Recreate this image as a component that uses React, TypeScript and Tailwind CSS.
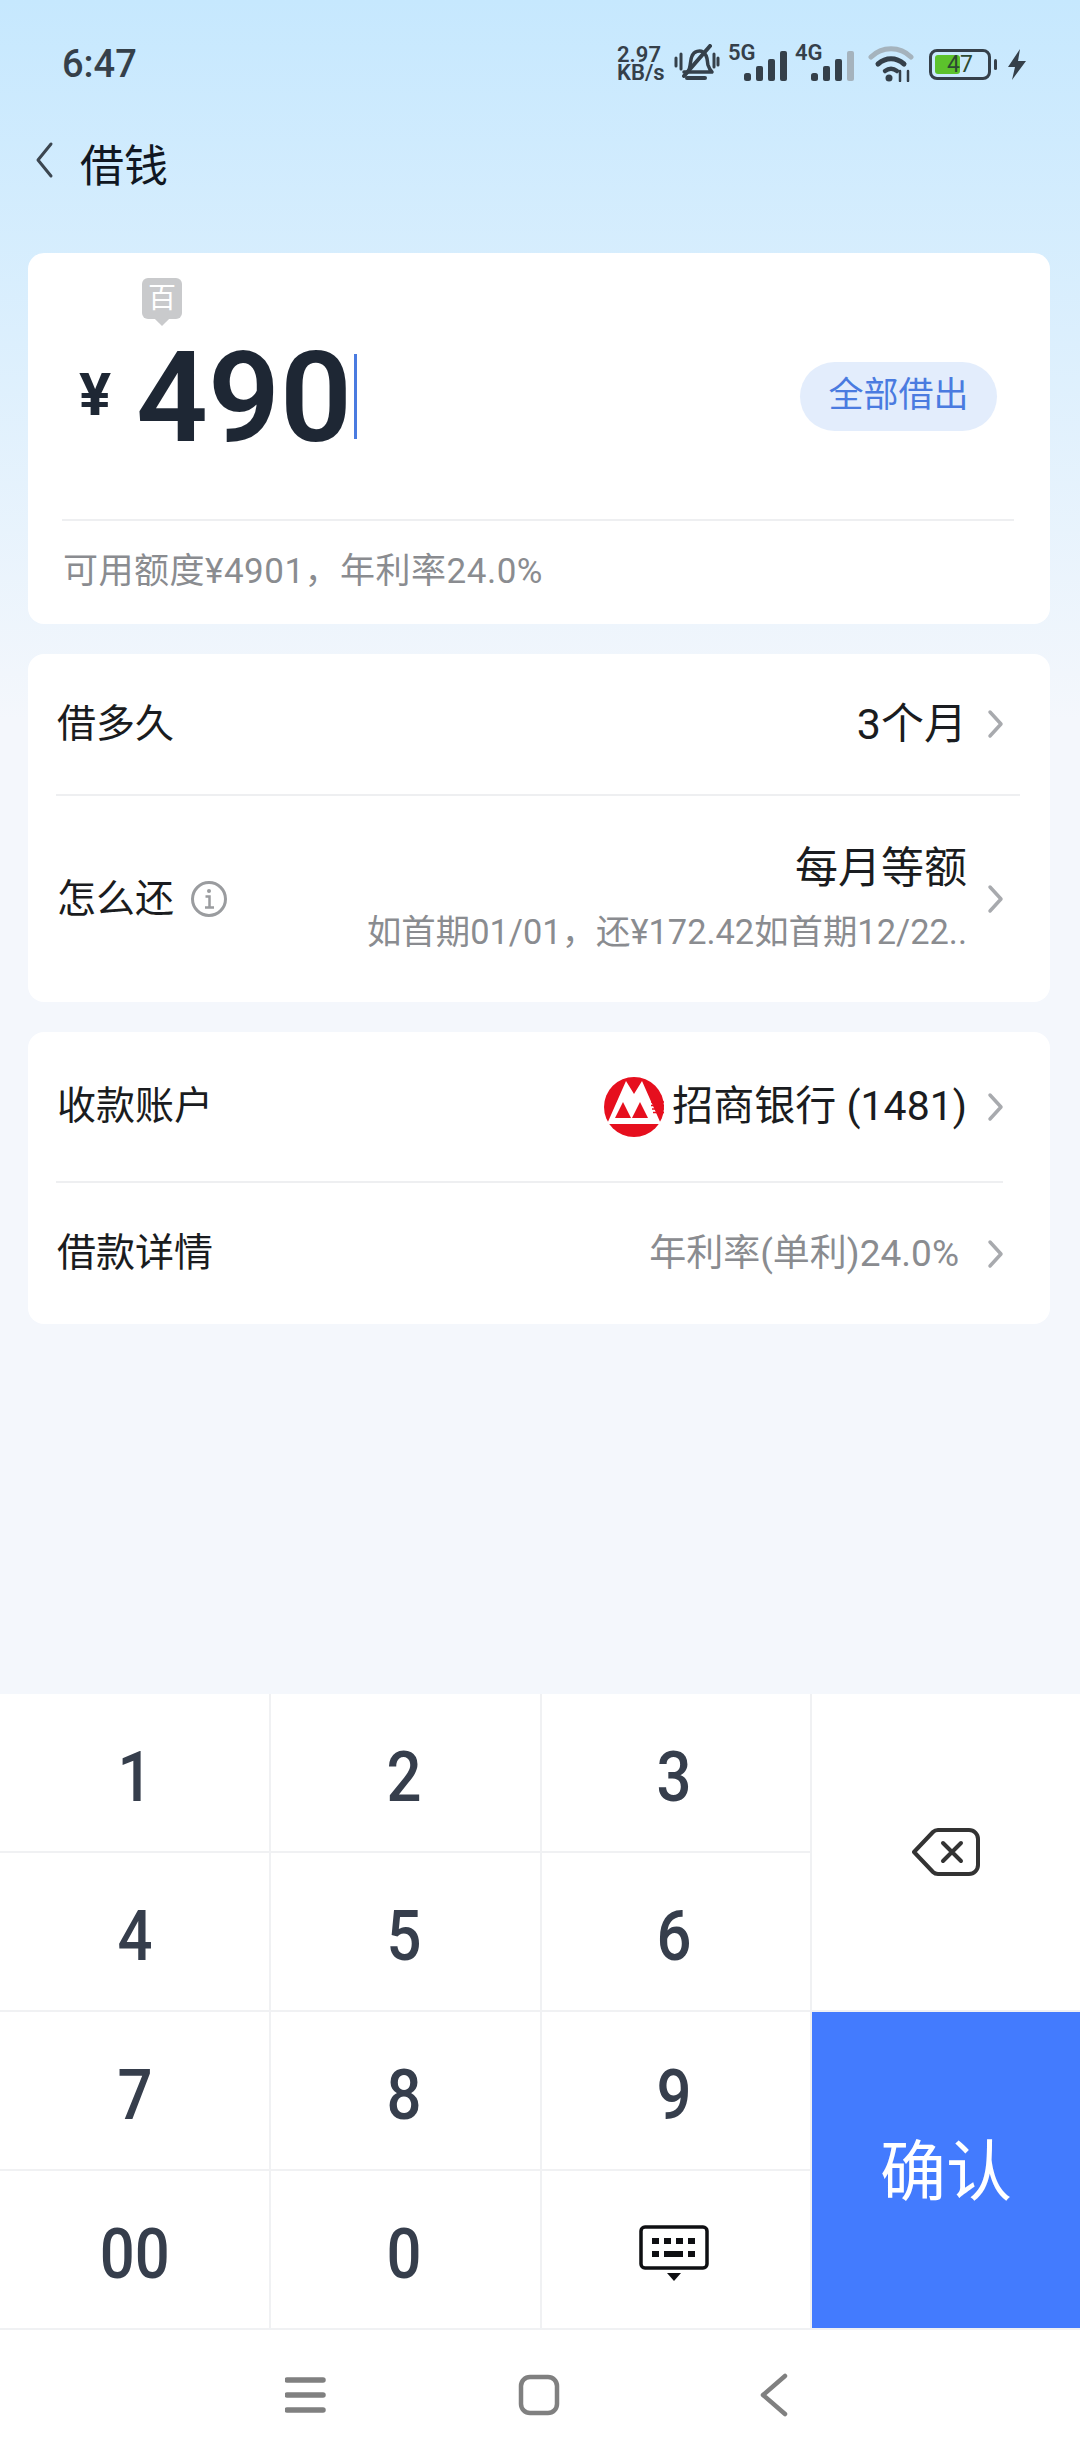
const Chevron = () => (
  <svg width="18" height="30" viewBox="0 0 18 30" fill="none" className="shrink-0">
    <path d="M3 3l11 12-11 12" stroke="#a8aaae" strokeWidth="3.5" strokeLinecap="round" strokeLinejoin="round" />
  </svg>
);

const Signal = ({ label, lastOff }: { label: string; lastOff?: boolean }) => (
  <div className="relative w-[60px] h-[34px]">
    <span className="absolute left-0 top-[-5px] text-[22px] leading-[22px] font-semibold text-[#35404a]">{label}</span>
    <svg width="44" height="30" viewBox="0 0 44 30" className="absolute right-0 bottom-0">
      <rect x="0" y="22" width="7" height="8" rx="2.5" fill="#35404a" />
      <rect x="12" y="15" width="7" height="15" rx="2" fill="#35404a" />
      <rect x="24" y="8" width="7" height="22" rx="2" fill="#35404a" />
      <rect x="36" y="0" width="7" height="30" rx="2" fill={lastOff ? "#a5b3bd" : "#35404a"} />
    </svg>
  </div>
);

const StatusBar = () => (
  <div className="h-[128px] flex items-center justify-between pl-[62px] pr-[53px] text-[#35404a]">
    <span className="text-[38px] font-medium leading-none">6:47</span>
    <div className="flex items-center">
      <div className="font-semibold text-[22px] leading-[18px] w-[57px]">
        2.97
        <br />
        KB/s
      </div>
      <svg width="46" height="40" viewBox="0 0 46 40" fill="none" stroke="#35404a" className="mr-[8px]">
        <path d="M14 28c3-5 2-12 4-16 2-5 8-6 11-4 5 3 4 9 5 13 1 3 2 5 4 7H10z" strokeWidth="3.5" strokeLinejoin="round" />
        <path d="M13 34h18" strokeWidth="4" strokeLinecap="round" />
        <path d="M36 2L10 32" strokeWidth="4" strokeLinecap="round" />
        <path d="M2 14v8M7 10v15M40 10v13M44 14v7" strokeWidth="3" strokeLinecap="round" />
      </svg>
      <Signal label="5G" />
      <div className="w-[7px]" />
      <Signal label="4G" lastOff />
      <svg width="46" height="36" viewBox="0 0 46 36" fill="none" className="ml-[13px] mr-[15px]" strokeLinecap="round">
        <path d="M3 11C14 0 32 0 43 11" stroke="#a5b3bd" strokeWidth="5" />
        <path d="M10 18c8-7 18-7 26 0" stroke="#35404a" strokeWidth="5" />
        <path d="M17 25c4-3 8-3 12 0" stroke="#35404a" strokeWidth="4.5" />
        <circle cx="21" cy="32" r="3.5" fill="#35404a" />
        <path d="M32 25v10M40 25v10" stroke="#35404a" strokeWidth="2.5" />
      </svg>
      <div className="relative w-[62px] h-[31px] rounded-[8px] border-[3px] border-[#35404a] p-[3px]">
        <div className="w-[25px] h-full rounded-[3px] bg-[#5cc22c]" />
        <span className="absolute inset-0 flex items-center justify-center text-[23px] leading-none text-[#2c4a33]">47</span>
      </div>
      <div className="w-[3px] h-[11px] rounded-full bg-[#35404a] ml-[3px]" />
      <svg width="20" height="31" viewBox="0 0 20 31" className="ml-[10px]">
        <path d="M13 0L1 18h7l-3 13L19 12h-8z" fill="#35404a" />
      </svg>
    </div>
  </div>
);

const Row = ({ label, children, className }: { label: React.ReactNode; children: React.ReactNode; className: string }) => (
  <div className={`flex items-center justify-between pl-[29px] pr-[45px] ${className}`}>
    <div className="flex items-center text-[39px] text-[#1a1c20]">{label}</div>
    <div className="flex items-center">
      {children}
      <Chevron />
    </div>
  </div>
);

const Logo = () => (
  <svg width="60" height="60" viewBox="0 0 60 60" className="mr-[8px]">
    <circle cx="30" cy="30" r="30" fill="#e60f1e" />
    <path d="M3 47L22 4l8 13 8-13 19 43z" fill="#fff" />
    <path d="M19 25l8 16H11zM36 25l8 16H28z" fill="#e60f1e" />
    <path d="M47 25h13M47 28.5h13M48 32h12M49 35.5h11" stroke="#e60f1e" strokeWidth="1.5" />
  </svg>
);

const Key = ({ children, className }: { children: React.ReactNode; className?: string }) => (
  <div className={`bg-white flex items-center justify-center ${className ?? ""}`}>
    <span className="text-[70px] leading-none font-medium text-[#363e4c] scale-x-[0.88] mt-[8px]">{children}</span>
  </div>
);

export default function App() {
  return (
    <div className="w-[1080px] h-[2460px] flex flex-col bg-[linear-gradient(#c6e8fe,#f4f7fc_720px)] font-[Roboto,'Noto_Sans_CJK_SC',sans-serif]">
      <StatusBar />

      <div className="h-[64px] flex items-center pl-[34px]">
        <svg width="20" height="38" viewBox="0 0 20 38" fill="none">
          <path d="M17 3L4 19l13 16" stroke="#3c4650" strokeWidth="3" strokeLinecap="round" strokeLinejoin="round" />
        </svg>
        <span className="ml-[26px] mt-[14px] text-[44px] leading-none text-[#101722]">借钱</span>
      </div>

      <div className="ml-[28px] w-[1022px] mt-[61px] flex flex-col gap-[30px]">
        <div className="relative h-[371px] rounded-[16px] bg-white flex flex-col">
          <div className="absolute left-[114px] top-[25px] w-[40px] h-[41px] rounded-[6px] bg-[#c9cacc] flex items-center justify-center text-[28px] leading-none text-white">
            百
            <div className="absolute left-[15px] bottom-[-5px] w-[10px] h-[10px] rotate-45 bg-[#c9cacc]" />
          </div>
          <div className="h-[266px] pt-[21px] pl-[51px] pr-[53px] flex items-center justify-between">
            <div className="flex items-center">
              <span className="text-[60px] font-bold leading-none text-[#1e2734] w-[57px] mt-[-4px]">¥</span>
              <span className="text-[126px] font-semibold leading-none text-[#1e2734] mt-[2px]">490</span>
              <div className="w-[3px] h-[85px] bg-[#4a7be0] ml-[2px]" />
            </div>
            <div className="w-[197px] h-[69px] rounded-full bg-[#e3edfc] flex items-center justify-center text-[35px] text-[#4a7be0]">
              全部借出
            </div>
          </div>
          <div className="ml-[34px] mr-[36px] h-[2px] bg-[#eeeff1]" />
          <div className="flex-1 flex items-center pl-[35px] text-[35px] tracking-[0.5px] text-[#8a8c90]">可用额度¥4901，年利率24.0%</div>
        </div>

        <div className="flex flex-col rounded-[16px] bg-white">
          <Row label="借多久" className="h-[140px]">
            <span className="text-[43px] text-[#1a1c20] mr-[20px]">3个月</span>
          </Row>
          <div className="ml-[28px] mr-[30px] h-[2px] bg-[#eeeff1]" />
          <Row
            className="h-[206px]"
            label={
              <>
                怎么还
                <svg width="38" height="38" viewBox="0 0 38 38" fill="none" className="ml-[16px]">
                  <circle cx="19" cy="19" r="16.5" stroke="#9a9c9f" strokeWidth="3" />
                  <path d="M15.5 16.5h4v11M15 27.5h9" stroke="#9a9c9f" strokeWidth="2.5" />
                  <circle cx="19" cy="11" r="2" fill="#9a9c9f" />
                </svg>
              </>
            }
          >
            <div className="flex flex-col items-end mr-[20px]">
              <span className="text-[43px] leading-[60px] text-[#1a1c20] mt-[-6px]">每月等额</span>
              <span className="text-[34.4px] leading-[44px] mt-[12px] text-[#8a8c90]">如首期01/01，还¥172.42如首期12/22..</span>
            </div>
          </Row>
        </div>

        <div className="flex flex-col rounded-[16px] bg-white">
          <Row label="收款账户" className="h-[149px]">
            <Logo />
            <span className="text-[41px] text-[#1a1c20] mr-[20px]">招商银行 (1481)</span>
          </Row>
          <div className="ml-[28px] mr-[47px] h-[2px] bg-[#eeeff1]" />
          <Row label="借款详情" className="h-[141px]">
            <span className="text-[37px] text-[#8a8c90] mr-[28px]">年利率(单利)24.0%</span>
          </Row>
        </div>
      </div>

      <div className="mt-auto">
        <div className="grid grid-cols-[269px_269px_268px_268px] grid-rows-[157px_157px_157px_157px] gap-[2px] bg-[#f0f1f3] pb-[2px]">
          <Key className="col-start-1 row-start-1">1</Key>
          <Key className="col-start-2 row-start-1 pr-[4px]">2</Key>
          <Key className="col-start-3 row-start-1 pr-[4px]">3</Key>
          <div className="col-start-4 row-start-1 row-span-2 bg-white flex items-center justify-center">
            <svg width="68" height="48" viewBox="0 0 68 48" fill="none" stroke="#333">
              <path d="M2 24L21 4c1-1 3-2 5-2h31c5 0 9 4 9 9v26c0 5-4 9-9 9H26c-2 0-4-1-5-2z" strokeWidth="4" strokeLinejoin="round" />
              <path d="M31 15l18 18M49 15L31 33" strokeWidth="4" strokeLinecap="round" />
            </svg>
          </div>
          <Key className="col-start-1 row-start-2">4</Key>
          <Key className="col-start-2 row-start-2 pr-[4px]">5</Key>
          <Key className="col-start-3 row-start-2 pr-[4px]">6</Key>
          <div className="col-start-4 row-start-3 row-span-2 bg-[#437bfe] flex items-center justify-center pt-[6px] text-[66px] leading-none text-white">确认</div>
          <Key className="col-start-1 row-start-3">7</Key>
          <Key className="col-start-2 row-start-3 pr-[4px]">8</Key>
          <Key className="col-start-3 row-start-3 pr-[4px]">9</Key>
          <Key className="col-start-1 row-start-4">00</Key>
          <Key className="col-start-2 row-start-4 pr-[4px]">0</Key>
          <div className="col-start-3 row-start-4 bg-white flex items-center justify-center pr-[4px]">
            <svg width="70" height="56" viewBox="0 0 70 56" fill="#0e0f12" className="mt-[6px]">
              <rect x="2" y="2" width="66" height="41" rx="4" fill="none" stroke="#0e0f12" strokeWidth="3.5" />
              <rect x="13" y="13" width="7" height="6" />
              <rect x="25" y="13" width="7" height="6" />
              <rect x="37" y="13" width="7" height="6" />
              <rect x="49" y="13" width="7" height="6" />
              <rect x="13" y="26" width="7" height="6" />
              <rect x="25" y="26" width="19" height="6" />
              <rect x="49" y="26" width="7" height="6" />
              <path d="M28 48h14l-7 8z" />
            </svg>
          </div>
        </div>
        <div className="h-[130px] bg-white flex items-center justify-center">
          <svg width="520" height="44" viewBox="0 0 520 44" fill="none" stroke="#808080" strokeLinecap="round" className="ml-[9px]">
            <path d="M2 7h36M2 22h36M2 37h36" strokeWidth="5.5" />
            <rect x="236" y="4" width="36" height="36" rx="9" strokeWidth="4.5" />
            <path d="M500 3L478 22l22 19" strokeWidth="4.5" strokeLinejoin="round" />
          </svg>
        </div>
      </div>
    </div>
  );
}
